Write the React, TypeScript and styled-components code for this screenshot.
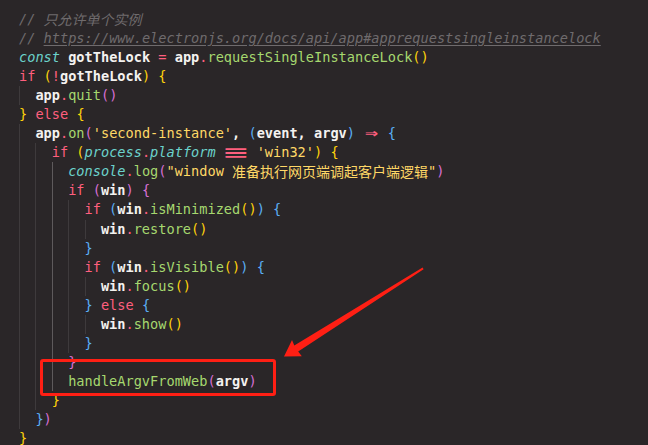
import React from "react";
import styled, { createGlobalStyle } from "styled-components";

const Global = createGlobalStyle`
  html, body { margin: 0; padding: 0; background: #2a2628; }
  #root { width: 648px; height: 445px; }
`;

const Editor = styled.div`
  position: relative;
  width: 648px;
  height: 445px;
  overflow: hidden;
  box-sizing: border-box;
  padding: 10px 0 0 19px;
  background: #2a2628;
  font-family: "DejaVu Sans Mono", "Liberation Mono", "Noto Sans CJK SC", monospace;
  font-size: 13.62px;
  color: #f2f0ee;
`;

const Line = styled.div`
  display: flex;
  align-items: stretch;
  height: 19.05px;
  line-height: 19.05px;
  white-space: pre;
`;

const Guide = styled.span<{ $active?: boolean }>`
  display: inline-block;
  flex: none;
  width: 2ch;
  box-shadow: inset 1px 0 0 ${(p) => (p.$active ? "#5e5a5c" : "#3e3a3c")};
`;

type Kind =
  | "cm"
  | "url"
  | "kw"
  | "id"
  | "op"
  | "fn"
  | "st"
  | "ctrl"
  | "b1"
  | "b2"
  | "b3";

const colors: Record<Kind, string> = {
  cm: "#6f6b6d",
  url: "#6f6b6d",
  kw: "#6cd3cc",
  id: "#f4f2f0",
  op: "#ff5f7e",
  fn: "#a6d86f",
  st: "#ffd866",
  ctrl: "#ff5f7e",
  b1: "#ffd20a",
  b2: "#d76fd4",
  b3: "#5aaef5",
};

const Tok = styled.span<{ $k: Kind }>`
  color: ${(p) => colors[p.$k]};
  font-style: ${(p) => (p.$k === "cm" || p.$k === "url" || p.$k === "kw" ? "italic" : "normal")};
  font-weight: ${(p) => (p.$k === "id" ? 600 : 400)};
  text-decoration: ${(p) => (p.$k === "url" ? "underline" : "none")};
  text-underline-offset: 2px;
`;

const Cjk = styled.span<{ $k: Kind }>`
  color: ${(p) => colors[p.$k]};
  font-family: "Noto Sans CJK SC", sans-serif;
  font-size: 14px;
  font-style: ${(p) => (p.$k === "cm" ? "italic" : "normal")};
`;

const Lig = styled.span<{ $w: number; $s: number; $fs: number }>`
  display: inline-block;
  width: ${(p) => p.$w}ch;
  text-align: center;
  color: #ff5f7e;
  font-weight: 700;
  overflow: visible;
  & > span {
    display: inline-block;
    font-size: ${(p) => p.$fs}px;
    line-height: 19.05px;
    transform: scaleX(${(p) => p.$s});
  }
`;

const Box = styled.div`
  position: absolute;
  left: 40px;
  top: 359px;
  width: 236px;
  height: 37px;
  box-sizing: border-box;
  border: 3px solid #ff1f14;
  border-radius: 3px;
`;

const Overlay = styled.svg`
  position: absolute;
  left: 0;
  top: 0;
  pointer-events: none;
`;

type T = [Kind | "arrow" | "eq" | "cjk", string];

type LineDef = { indent: number; tokens: T[] };

const lines: LineDef[] = [
  { indent: 0, tokens: [["cm", "// "], ["cjk", "cm|只允许单个实例"]] },
  { indent: 0, tokens: [["cm", "// "], ["url", "https://www.electronjs.org/docs/api/app#apprequestsingleinstancelock"]] },
  { indent: 0, tokens: [["kw", "const"], ["id", " gotTheLock "], ["op", "="], ["id", " app"], ["op", "."], ["fn", "requestSingleInstanceLock"], ["b1", "()"]] },
  { indent: 0, tokens: [["ctrl", "if"], ["id", " "], ["b1", "("], ["op", "!"], ["id", "gotTheLock"], ["b1", ")"], ["id", " "], ["b1", "{"]] },
  { indent: 1, tokens: [["id", "app"], ["op", "."], ["fn", "quit"], ["b2", "()"]] },
  { indent: 0, tokens: [["b1", "}"], ["ctrl", " else "], ["b1", "{"]] },
  { indent: 1, tokens: [["id", "app"], ["op", "."], ["fn", "on"], ["b2", "("], ["st", "'second-instance'"], ["id", ", "], ["b3", "("], ["id", "event, argv"], ["b3", ")"], ["id", " "], ["arrow", "⇒"], ["id", " "], ["b3", "{"]] },
  { indent: 2, tokens: [["ctrl", "if"], ["id", " "], ["b1", "("], ["kw", "process"], ["op", "."], ["kw", "platform"], ["id", " "], ["eq", "≡"], ["id", " "], ["st", "'win32'"], ["b1", ")"], ["id", " "], ["b1", "{"]] },
  { indent: 3, tokens: [["kw", "console"], ["op", "."], ["fn", "log"], ["b2", "("], ["st", "\"window "], ["cjk", "st|准备执行网页端调起客户端逻辑"], ["st", "\""], ["b2", ")"]] },
  { indent: 3, tokens: [["ctrl", "if"], ["id", " "], ["b2", "("], ["id", "win"], ["b2", ")"], ["id", " "], ["b2", "{"]] },
  { indent: 4, tokens: [["ctrl", "if"], ["id", " "], ["b3", "("], ["id", "win"], ["op", "."], ["fn", "isMinimized"], ["b1", "()"], ["b3", ")"], ["id", " "], ["b3", "{"]] },
  { indent: 5, tokens: [["id", "win"], ["op", "."], ["fn", "restore"], ["b1", "()"]] },
  { indent: 4, tokens: [["b3", "}"]] },
  { indent: 4, tokens: [["ctrl", "if"], ["id", " "], ["b3", "("], ["id", "win"], ["op", "."], ["fn", "isVisible"], ["b1", "()"], ["b3", ")"], ["id", " "], ["b3", "{"]] },
  { indent: 5, tokens: [["id", "win"], ["op", "."], ["fn", "focus"], ["b1", "()"]] },
  { indent: 4, tokens: [["b3", "}"], ["ctrl", " else "], ["b3", "{"]] },
  { indent: 5, tokens: [["id", "win"], ["op", "."], ["fn", "show"], ["b1", "()"]] },
  { indent: 4, tokens: [["b3", "}"]] },
  { indent: 3, tokens: [["b2", "}"]] },
  { indent: 3, tokens: [["fn", "handleArgvFromWeb"], ["b2", "("], ["id", "argv"], ["b2", ")"]] },
  { indent: 2, tokens: [["b1", "}"]] },
  { indent: 1, tokens: [["b3", "}"], ["b2", ")"]] },
  { indent: 0, tokens: [["b1", "}"]] },
];

function renderToken(t: T, i: number) {
  const [k, text] = t;
  if (k === "arrow")
    return (
      <Lig key={i} $w={2} $s={1.45} $fs={15}>
        <span>{text}</span>
      </Lig>
    );
  if (k === "eq")
    return (
      <Lig key={i} $w={3} $s={2.5} $fs={16}>
        <span>{text}</span>
      </Lig>
    );
  if (k === "cjk") {
    const [kind, s] = text.split("|");
    return (
      <Cjk key={i} $k={kind as Kind}>
        {s}
      </Cjk>
    );
  }
  return (
    <Tok key={i} $k={k}>
      {text}
    </Tok>
  );
}

export default function App() {
  return (
    <>
      <Global />
      <Editor>
        {lines.map((l, li) => (
          <Line key={li}>
            {Array.from({ length: l.indent }).map((_, gi) => (
              <Guide key={gi} $active={gi === 2 && li >= 8 && li <= 19} />
            ))}
            {l.tokens.map(renderToken)}
          </Line>
        ))}
        <Box />
        <Overlay width="648" height="445" viewBox="0 0 648 445">
          <polygon
            points="284,356.5 292,340 294.3,345.4 422.6,267.6 423.6,269.2 298.2,351.6 301.8,356.2"
            fill="#ff1f14"
          />
        </Overlay>
      </Editor>
    </>
  );
}
